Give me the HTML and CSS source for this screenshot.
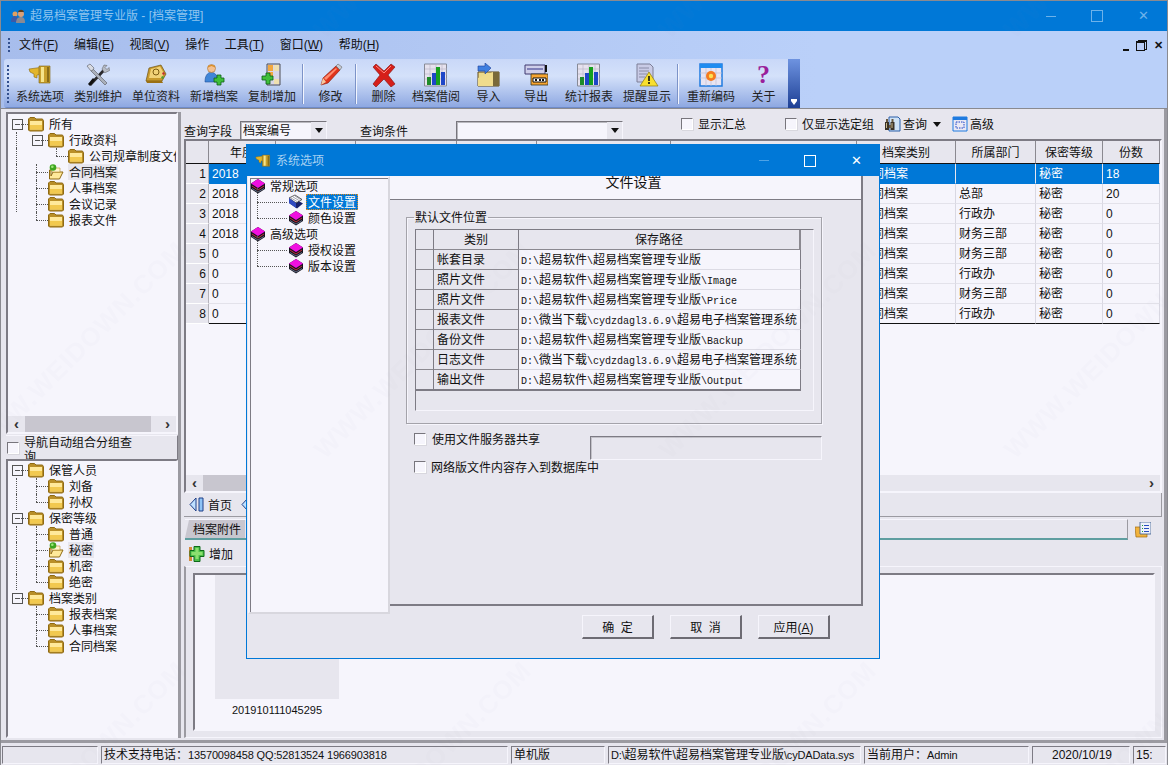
FILE: index.html
```html
<!DOCTYPE html>
<html lang="zh-CN">
<head>
<meta charset="utf-8">
<title>超易档案管理专业版</title>
<link rel="stylesheet" href="styles.css">
</head>
<body>
<svg class="defs" width="0" height="0" aria-hidden="true">
  <defs>
    <symbol id="folder" viewBox="0 0 16 16"><path d="M.5 4V3L2 1.500h4.500L8 3h6.500L15.500 5v9l-1 1h-13l-1-1z" fill="#b98f28" stroke="#8f6a14"/><path d="M2 5h12v8.500H2z" fill="#ffe99a"/><path d="M2 9h12v4.500H2z" fill="#f2c94f"/></symbol>
    <symbol id="folder-open" viewBox="0 0 16 16"><path d="M1.500 6v9h10l3.500-7H5l-2 4V6z" fill="#ffe99a" stroke="#8f6a14"/><path d="M3 7l2-3h7v4H5z" fill="#fff6cf" stroke="#b98f28" stroke-width=".6"/><circle cx="5" cy="3.500" r="3.300" fill="#3da51f"/><circle cx="4.300" cy="2.700" r="1.300" fill="#9fe57a"/></symbol>
    <symbol id="book" viewBox="0 0 16 16"><path d="M1 5.500 8 1l7 4.500V11l-7 4.500L1 11z" fill="#15151f"/><path d="M1 5.500 8 1l7 4.500L8 10z" fill="#f010e0"/><path d="M2 8l6 4 6-4" fill="none" stroke="#d83040" stroke-width=".9"/><path d="M2 10.500l6 3.500 6-3.500" fill="none" stroke="#6a7690" stroke-width=".9"/></symbol>
    <symbol id="book-open" viewBox="0 0 16 16"><path d="M1 9l8 5.500 6-5-7-4z" fill="#18206a"/><path d="M1 4l7 5 6-3.500L7 1z" fill="#fff" stroke="#222" stroke-width=".7"/><path d="M3 4l6 3.500M5 3l6 3.500M7 2l5.500 3.500" stroke="#667" stroke-width=".6"/><path d="M1 4v5l7 5V9z" fill="#2f49c0"/></symbol>
    <symbol id="gavel" viewBox="0 0 24 24"><path d="M1 6l11-1.500v7l-3 .5v3l-3-1V11L2 9z" fill="#e2b52c" stroke="#8a6a10" stroke-width=".6"/><path d="M11 3h11v17H11z" fill="#c9a02c" stroke="#7c6113" stroke-width=".6"/><path d="M13 4h3v15h-3z" fill="#f6e48a"/><path d="M19 4h2v15h-2z" fill="#8a6d17"/></symbol>
    <symbol id="tools" viewBox="0 0 24 24"><path d="M3 21l2 2L20 7l-2-2z" fill="#2a2a2e"/><path d="M16 6l2-4 3 .5-2 2 2 2 2-2 .5 3-4 2-1.500-.2z" fill="#b7bcc6" stroke="#555" stroke-width=".5"/><path d="M21 20l-2 2L5 8 7 6z" fill="#aab0ba" stroke="#55585f" stroke-width=".6"/><path d="M1 3l3-2 4 4-1 2-2 1z" fill="#d8dbe2" stroke="#55585f" stroke-width=".6"/><path d="M2 21l5-6 2 2-5 6z" fill="#111"/></symbol>
    <symbol id="address" viewBox="0 0 24 24"><path d="M5 5l12-3 5 9-4 7H2z" fill="#c89a2c" stroke="#6e5312" stroke-width=".7"/><path d="M7 6l9-2.500 4 7-2.500 4.500H5z" fill="#f1d277"/><circle cx="12" cy="9" r="3" fill="none" stroke="#7c5b10"/><path d="M2 18l16 0 1 2H3z" fill="#9a7014"/><path d="M19 9l2 1-1 2-2-1z" fill="#c03030"/><path d="M18 13l2 1-1 2-2-1z" fill="#4aa030"/></symbol>
    <symbol id="user-add" viewBox="0 0 24 24"><path d="M9 9c-4 1-6 4-6 10h13c0-6-2-9-7-10z" fill="#3f86d8" stroke="#1f4f98" stroke-width=".6"/><circle cx="9.500" cy="5.500" r="4" fill="#f3c090" stroke="#a56e30" stroke-width=".6"/><path d="M5.500 4.500C6 1 13 1 13.500 4.500L9.500 3z" fill="#d98a1f"/><path d="M15 12h4v3h3v4h-3v3h-4v-3h-3v-4h3z" fill="#3fbf3a" stroke="#0c5f16" stroke-width=".8"/></symbol>
    <symbol id="copy-add" viewBox="0 0 24 24"><path d="M7 1h13v21H7z" fill="#d9d6e8" stroke="#4f4f55"/><path d="M8 2h5v6H8zM8 9h5v6H8z" fill="#f2a73e"/><path d="M14 2h5v6h-5zM14 16h5v5h-5z" fill="#efe0b0"/><path d="M2 13h4v-3h4v3h3v4h-3v4H6v-4H2z" fill="#3fbf3a" stroke="#0c5f16" stroke-width=".8"/></symbol>
    <symbol id="pencil" viewBox="0 0 24 24"><path d="M2 22l2-7L17 3l4 4L9 20z" fill="#e0341c" stroke="#801808" stroke-width=".6"/><path d="M17 3l2-2 4 3-2 3z" fill="#c9ccd4" stroke="#666" stroke-width=".6"/><path d="M5 15L17 5l1 1L7 17z" fill="#ff8d70"/><path d="M2 22l2-7 3 4z" fill="#f4c9a0"/></symbol>
    <symbol id="cross" viewBox="0 0 24 24"><path d="M1 4l3-3 8 7 7-7 4 3-7 8 7 9-4 3-7-8-8 8-3-3 7-9z" fill="#d61f1a" stroke="#7f0f0b" stroke-width=".6"/><path d="M4 3l8 7 7-7" fill="none" stroke="#ff8a80"/></symbol>
    <symbol id="chart" viewBox="0 0 24 24"><path d="M.5 1h22v22H.5z" fill="#e6e2ee" stroke="#878a96"/><path d="M1 6h22M1 11h22M1 16h22M6 1v22M12 1v22M18 1v22" stroke="#b6b4c4" stroke-width=".6"/><path d="M3 14h4v8H3z" fill="#1e8c2a"/><path d="M8 10h4v12H8z" fill="#1e46c8"/><path d="M12 4h4v18h-4z" fill="#16a01e"/><path d="M17 9h4v13h-4z" fill="#1e46c8"/></symbol>
    <symbol id="import" viewBox="0 0 24 24"><path d="M1 9h21v14H1z" fill="#ecd98a" stroke="#5f4a1a"/><path d="M16 9h6v14h-6z" fill="#7a6a3a"/><path d="M1 15l15-6v14H1z" fill="#f0dc8c"/><path d="M1 3h7V0l6 5-6 6V8H1z" fill="#3f7fe0" stroke="#1f3f98" stroke-width=".6"/></symbol>
    <symbol id="export" viewBox="0 0 24 24"><path d="M1 2h20v9H1z" fill="#cfcfea" stroke="#403a70"/><path d="M3 5h16v2H3z" fill="#8080b8"/><path d="M21 2h2v7h-2z" fill="#111"/><path d="M7 11h17v11H7z" fill="#f7a531" stroke="#332" stroke-width=".8"/><path d="M9 15h13v4H9z" fill="#fff" stroke="#111"/><path d="M11 16h2v2h-2zM15 16h2v2h-2zM18 16h2v2h-2z" fill="#111"/></symbol>
    <symbol id="warn" viewBox="0 0 24 24"><path d="M2 1h13l3 3v15H2z" fill="#c9cbe6" stroke="#7c7e96"/><path d="M4 5h10M4 8h10M4 11h8M4 14h6" stroke="#8a8ca8"/><path d="M14 9l9 14H5z" fill="#f8df30" stroke="#8c7a10" stroke-width=".7"/><path d="M13.200 13h1.600v5h-1.600zM13.200 19h1.600v2h-1.600z" fill="#111"/></symbol>
    <symbol id="calendar" viewBox="0 0 24 24"><path d="M1 1h22v22H1z" fill="#e8e4f2" stroke="#1f7be0" stroke-width="1.500"/><path d="M1 1h22v4H1z" fill="#1f8cf0"/><path d="M1 10h22M1 15h22M7 5v18M12 5v18M17 5v18" stroke="#c0bed2" stroke-width=".7"/><circle cx="12" cy="13" r="5" fill="#f57a20"/><circle cx="12" cy="13" r="2.200" fill="#ffe050"/></symbol>
    <symbol id="search" viewBox="0 0 16 16"><path d="M4 1h9l2 2v12H4z" fill="#cfe2f6" stroke="#2a5fa8"/><path d="M0 6h4v8H0zM5.500 6h4v8h-4z" fill="#3a3228"/><path d="M1 3h2v3H1zM6.500 3h2v3h-2z" fill="#6a5a40"/><path d="M4 9h2v3H4z" fill="#6a5a40"/><path d="M1 7h1v5H1zM6.500 7h1v5h-1z" fill="#c9b98a"/></symbol>
    <symbol id="advanced" viewBox="0 0 16 16"><path d="M1 1h14v14H1z" fill="#e9e8f4" stroke="#1f7be0"/><path d="M1 1h14v3H1z" fill="#1f7be0"/><path d="M4 6h8v6H4z" fill="none" stroke="#1f46c8" stroke-dasharray="1.500 1"/></symbol>
    <symbol id="first" viewBox="0 0 16 16"><path d="M7 1v13L1 7.500z" fill="#bfe0ff" stroke="#1f3f88"/><path d="M10 1h4v13h-4z" fill="#8fc4f6" stroke="#1f3f88"/></symbol>
    <symbol id="plus" viewBox="0 0 16 16"><path d="M0 1h3v14H0z" fill="#d58a3a"/><path d="M5 .5h6v4h4v6h-4v5H5v-5H1v-6h4z" fill="#4cc04a" stroke="#0f6a1a"/><path d="M6.500 2h3v4h4v3h-4v4h-3V9h-4V6h4z" fill="#8ce070"/></symbol>
    <symbol id="report" viewBox="0 0 16 16"><path d="M0 5h10l2 2v8H1z" fill="#f2b33c" stroke="#a06a10" stroke-width=".7"/><path d="M5 0h11v12H5z" fill="#eef2fb" stroke="#39598c" stroke-width=".8"/><path d="M7 3h1v1H7zM7 6h1v1H7zM7 9h1v1H7z" fill="#1fa030"/><path d="M9 3h5v1H9zM9 6h5v1H9zM9 9h5v1H9z" fill="#2a4fc0"/></symbol>
  </defs>
</svg>

<div class="app">
  <header class="title-bar">
    <svg class="title-icon" viewBox="0 0 16 16"><circle cx="5" cy="6" r="2.500" fill="#e0a060"/><path d="M1 14c0-4 2-6 4-6s3 2 3 6z" fill="#3a5aa8"/><circle cx="11" cy="6" r="3" fill="#d9a078"/><path d="M8 4c1-3 5-3 6 0z" fill="#5a3a1a"/><path d="M6 15c0-4 2-6 5-6s4 2 4 6z" fill="#8a8a92"/></svg>
    <span class="title-text">超易档案管理专业版 - [档案管理]</span>
    <span class="win-ctl"><i class="ctl-min"></i><i class="ctl-max"></i><i class="ctl-close">✕</i></span>
  </header>

  <div class="bars">
    <nav class="menu-bar">
      <span class="gripper"></span>
      <span class="menu-item">文件(<u>F</u>)</span>
      <span class="menu-item">编辑(<u>E</u>)</span>
      <span class="menu-item">视图(<u>V</u>)</span>
      <span class="menu-item">操作</span>
      <span class="menu-item">工具(<u>T</u>)</span>
      <span class="menu-item">窗口(<u>W</u>)</span>
      <span class="menu-item">帮助(<u>H</u>)</span>
      <span class="mdi-ctl"><i class="mdi-min"></i><i class="mdi-restore"></i><i class="mdi-close">✕</i></span>
    </nav>
    <div class="tool-bar">
      <span class="gripper tall"></span>
      <a class="tool wide"><svg><use href="#gavel"/></svg><span>系统选项</span></a>
      <a class="tool wide"><svg><use href="#tools"/></svg><span>类别维护</span></a>
      <a class="tool wide"><svg><use href="#address"/></svg><span>单位资料</span></a>
      <a class="tool wide"><svg><use href="#user-add"/></svg><span>新增档案</span></a>
      <a class="tool wide"><svg><use href="#copy-add"/></svg><span>复制增加</span></a>
      <span class="tool-sep"></span>
      <a class="tool"><svg><use href="#pencil"/></svg><span>修改</span></a>
      <span class="tool-sep"></span>
      <a class="tool"><svg><use href="#cross"/></svg><span>删除</span></a>
      <a class="tool wide"><svg><use href="#chart"/></svg><span>档案借阅</span></a>
      <a class="tool"><svg><use href="#import"/></svg><span>导入</span></a>
      <a class="tool tool-48"><svg><use href="#export"/></svg><span>导出</span></a>
      <a class="tool wide"><svg><use href="#chart"/></svg><span>统计报表</span></a>
      <a class="tool wide"><svg><use href="#warn"/></svg><span>提醒显示</span></a>
      <span class="tool-sep"></span>
      <a class="tool wide"><svg><use href="#calendar"/></svg><span>重新编码</span></a>
      <a class="tool"><b class="help-glyph">?</b><span>关于</span></a>
      <span class="tool-end"><i></i></span>
    </div>
  </div>

  <main class="workspace">
    <aside class="left-pane">
      <div class="sunken tree-top">
        <div class="tree">
          <div class="node"><span class="cell box"></span><svg class="ico"><use href="#folder"/></svg><span class="label">所有</span></div>
          <div class="node"><span class="cell vline"></span><span class="cell box"></span><svg class="ico"><use href="#folder"/></svg><span class="label">行政资料</span></div>
          <div class="node"><span class="cell vline"></span><span class="cell"></span><span class="cell ell"></span><svg class="ico"><use href="#folder"/></svg><span class="label">公司规章制度文件</span></div>
          <div class="node"><span class="cell vline"></span><span class="cell tee"></span><svg class="ico"><use href="#folder-open"/></svg><span class="label on">合同档案</span></div>
          <div class="node"><span class="cell vline"></span><span class="cell tee"></span><svg class="ico"><use href="#folder"/></svg><span class="label">人事档案</span></div>
          <div class="node"><span class="cell vline"></span><span class="cell tee"></span><svg class="ico"><use href="#folder"/></svg><span class="label">会议记录</span></div>
          <div class="node"><span class="cell"></span><span class="cell ell"></span><svg class="ico"><use href="#folder"/></svg><span class="label">报表文件</span></div>
        </div>
        <div class="hscroll"><b class="arrow">‹</b><i class="thumb thumb-left"></i><b class="arrow">›</b></div>
      </div>
      <div class="group-check">
        <span class="check"></span>
        <span class="group-check-text">导航自动组合分组查询</span>
      </div>
      <div class="sunken tree-bottom">
        <div class="tree">
          <div class="node"><span class="cell box"></span><svg class="ico"><use href="#folder"/></svg><span class="label">保管人员</span></div>
          <div class="node"><span class="cell vline"></span><span class="cell tee"></span><svg class="ico"><use href="#folder"/></svg><span class="label">刘备</span></div>
          <div class="node"><span class="cell vline"></span><span class="cell ell"></span><svg class="ico"><use href="#folder"/></svg><span class="label">孙权</span></div>
          <div class="node"><span class="cell box"></span><svg class="ico"><use href="#folder"/></svg><span class="label">保密等级</span></div>
          <div class="node"><span class="cell vline"></span><span class="cell tee"></span><svg class="ico"><use href="#folder"/></svg><span class="label">普通</span></div>
          <div class="node"><span class="cell vline"></span><span class="cell tee"></span><svg class="ico"><use href="#folder-open"/></svg><span class="label on">秘密</span></div>
          <div class="node"><span class="cell vline"></span><span class="cell tee"></span><svg class="ico"><use href="#folder"/></svg><span class="label">机密</span></div>
          <div class="node"><span class="cell vline"></span><span class="cell ell"></span><svg class="ico"><use href="#folder"/></svg><span class="label">绝密</span></div>
          <div class="node"><span class="cell box"></span><svg class="ico"><use href="#folder"/></svg><span class="label">档案类别</span></div>
          <div class="node"><span class="cell"></span><span class="cell tee"></span><svg class="ico"><use href="#folder"/></svg><span class="label">报表档案</span></div>
          <div class="node"><span class="cell"></span><span class="cell tee"></span><svg class="ico"><use href="#folder"/></svg><span class="label">人事档案</span></div>
          <div class="node"><span class="cell"></span><span class="cell ell"></span><svg class="ico"><use href="#folder"/></svg><span class="label">合同档案</span></div>
        </div>
      </div>
    </aside>

    <section class="right-pane">
      <div class="query-row">
        <span class="q-label">查询字段</span>
        <span class="select select-field"><span>档案编号</span><b></b></span>
        <span class="q-label q-cond">查询条件</span>
        <span class="select select-cond"><span></span><b></b></span>
        <span class="check q-check-a"></span><span class="q-text">显示汇总</span>
        <span class="check q-check-b"></span><span class="q-text">仅显示选定组</span>
        <svg class="ico q-search"><use href="#search"/></svg><span class="q-text">查询</span><i class="q-caret"></i>
        <svg class="ico q-adv"><use href="#advanced"/></svg><span class="q-text">高级</span>
      </div>

      <div class="sunken data-grid">
        <div class="grid-rows">
          <div class="g-row g-head"><span>&nbsp;</span><span>年度</span><span></span><span></span><span></span><span></span><span></span><span>档案类别</span><span>所属部门</span><span>保密等级</span><span>份数</span></div>
          <div class="g-row g-sel"><span>1</span><span>2018</span><span></span><span></span><span></span><span></span><span></span><span>合同档案</span><span></span><span>秘密</span><span>18</span></div>
          <div class="g-row"><span>2</span><span>2018</span><span></span><span></span><span></span><span></span><span></span><span>合同档案</span><span>总部</span><span>秘密</span><span>20</span></div>
          <div class="g-row"><span>3</span><span>2018</span><span></span><span></span><span></span><span></span><span></span><span>合同档案</span><span>行政办</span><span>秘密</span><span>0</span></div>
          <div class="g-row"><span>4</span><span>2018</span><span></span><span></span><span></span><span></span><span></span><span>合同档案</span><span>财务三部</span><span>秘密</span><span>0</span></div>
          <div class="g-row"><span>5</span><span>0</span><span></span><span></span><span></span><span></span><span></span><span>合同档案</span><span>财务三部</span><span>秘密</span><span>0</span></div>
          <div class="g-row"><span>6</span><span>0</span><span></span><span></span><span></span><span></span><span></span><span>合同档案</span><span>行政办</span><span>秘密</span><span>0</span></div>
          <div class="g-row"><span>7</span><span>0</span><span></span><span></span><span></span><span></span><span></span><span>合同档案</span><span>财务三部</span><span>秘密</span><span>0</span></div>
          <div class="g-row g-last"><span>8</span><span>0</span><span></span><span></span><span></span><span></span><span></span><span>合同档案</span><span>行政办</span><span>秘密</span><span>0</span></div>
        </div>
        <div class="hscroll"><b class="arrow">‹</b><i class="thumb thumb-grid"></i><b class="arrow">›</b></div>
      </div>

      <div class="nav-row"><svg class="ico"><use href="#first"/></svg><span class="nav-text">首页</span><svg class="ico nav-next"><use href="#first"/></svg></div>
      <div class="tab-row">
        <div class="tab-strip"><span class="tab">档案附件</span></div>
        <svg class="ico tab-report"><use href="#report"/></svg>
      </div>
      <div class="attach-tools"><svg class="ico"><use href="#plus"/></svg><span class="nav-text">增加</span></div>
      <div class="attach-frame">
        <div class="sunken attach-view">
          <figure class="thumb-card">
            <div class="thumb-image"></div>
            <figcaption>201910111045295</figcaption>
          </figure>
        </div>
      </div>
    </section>
  </main>

  <footer class="status-bar">
    <span class="st st-a"></span>
    <span class="st st-b">技术支持电话：<span class="num">13570098458 QQ:52813524 1966903818</span></span>
    <span class="st st-c">单机版</span>
    <span class="st st-d"><span class="num">D:\</span>超易软件\超易档案管理专业版<span class="num">\cyDAData.sys</span></span>
    <span class="st st-e">当前用户：<span class="num">Admin</span></span>
    <span class="st st-f">2020/10/19</span>
    <span class="st st-g">15:</span>
  </footer>
</div>

<div class="dialog">
  <header class="dlg-title">
    <svg class="dlg-icon"><use href="#gavel"/></svg>
    <span class="dlg-title-text">系统选项</span>
    <span class="dlg-ctl"><i class="ctl-min"></i><i class="ctl-max"></i><i class="ctl-close">✕</i></span>
  </header>
  <div class="dlg-body">
    <div class="dlg-tree">
      <div class="d-node"><svg class="ico"><use href="#book"/></svg><span class="d-label">常规选项</span></div>
      <div class="d-node child d-tee"><svg class="ico"><use href="#book-open"/></svg><span class="d-label d-sel">文件设置</span></div>
      <div class="d-node child d-ell"><svg class="ico"><use href="#book"/></svg><span class="d-label">颜色设置</span></div>
      <div class="d-node"><svg class="ico"><use href="#book"/></svg><span class="d-label">高级选项</span></div>
      <div class="d-node child d-tee"><svg class="ico"><use href="#book"/></svg><span class="d-label">授权设置</span></div>
      <div class="d-node child d-ell"><svg class="ico"><use href="#book"/></svg><span class="d-label">版本设置</span></div>
    </div>
    <div class="dlg-main">
      <div class="dlg-panel">
        <h2 class="panel-head">文件设置</h2>
        <fieldset class="file-group">
          <legend>默认文件位置</legend>
          <div class="path-grid">
            <div class="p-row p-head"><span></span><span>类别</span><span>保存路径</span></div>
            <div class="p-row"><span></span><span>帐套目录</span><span><em>D:\</em>超易软件<em>\</em>超易档案管理专业版</span></div>
            <div class="p-row"><span></span><span>照片文件</span><span><em>D:\</em>超易软件<em>\</em>超易档案管理专业版<em>\Image</em></span></div>
            <div class="p-row"><span></span><span>照片文件</span><span><em>D:\</em>超易软件<em>\</em>超易档案管理专业版<em>\Price</em></span></div>
            <div class="p-row"><span></span><span>报表文件</span><span><em>D:\</em>微当下载<em>\cydzdagl3.6.9\</em>超易电子档案管理系统</span></div>
            <div class="p-row"><span></span><span>备份文件</span><span><em>D:\</em>超易软件<em>\</em>超易档案管理专业版<em>\Backup</em></span></div>
            <div class="p-row"><span></span><span>日志文件</span><span><em>D:\</em>微当下载<em>\cydzdagl3.6.9\</em>超易电子档案管理系统</span></div>
            <div class="p-row"><span></span><span>输出文件</span><span><em>D:\</em>超易软件<em>\</em>超易档案管理专业版<em>\Output</em></span></div>
          </div>
        </fieldset>
        <div class="opt-row opt-share">
          <span class="check"></span><span class="opt-text">使用文件服务器共享</span>
          <span class="opt-input"></span>
        </div>
        <div class="opt-row">
          <span class="check"></span><span class="opt-text opt-text-b">网络版文件内容存入到数据库中</span>
        </div>
      </div>
      <div class="dlg-buttons">
        <button class="btn" type="button">确 定</button>
        <button class="btn" type="button">取 消</button>
        <button class="btn" type="button">应用(<u>A</u>)</button>
      </div>
    </div>
  </div>
</div>

<svg class="watermark" width="1168" height="765" aria-hidden="true">
  <defs>
    <pattern id="wm" width="690" height="420" patternUnits="userSpaceOnUse" x="-60" y="120">
      <text x="0" y="0" transform="translate(40 340) rotate(-45)" class="wm-text">WWW.WEIDOWN.COM</text>
      <text x="0" y="0" transform="translate(385 340) rotate(-45)" class="wm-text">WWW.WEIDOWN.COM</text>
    </pattern>
  </defs>
  <rect width="1168" height="765" fill="url(#wm)"/>
</svg>
</body>
</html>
```
FILE: styles.css
```css
:root {
  --face: #e7e6ee;
  --paper: #f6f5fc;
  --dark: #7d7b84;
  --band: #9b9aa1;
  --blue: #0078d7;
  --ui: "Liberation Sans", "Noto Sans CJK SC", sans-serif;
}
* { box-sizing: border-box; }
html, body { margin: 0; padding: 0; }
body {
  position: relative;
  width: 1168px;
  height: 765px;
  overflow: hidden;
  font: 12px/16px var(--ui);
  color: #111;
  background: var(--face);
}
.defs { position: absolute; }
svg { display: block; }
i, em { font-style: normal; }

.app { display: flex; flex-direction: column; height: 765px; border: 1px solid #8a8a90; border-bottom: 0; }

/* title */
.title-bar { display: flex; align-items: center; height: 30px; background: var(--blue); color: #8fc4ee; flex: none; }
.title-icon { width: 16px; height: 16px; margin-left: 9px; }
.title-text { margin-left: 4px; }
.win-ctl, .dlg-ctl { margin-left: auto; display: flex; align-items: center; }
.win-ctl i { width: 46px; display: flex; justify-content: center; align-items: center; height: 30px; color: #6db2ea; }
.win-ctl { margin-right: 1px; }
.ctl-min::before { content: ""; width: 10px; height: 1px; background: currentColor; }
.ctl-max::before { content: ""; width: 10px; height: 10px; border: 1px solid currentColor; }
.ctl-close { font-size: 13px; }

/* bars */
.bars { height: 78px; flex: none; background: linear-gradient(90deg, #a7bdec, #bad0f9 70%); border-bottom: 1px solid #8a8a90; }
.menu-bar { display: flex; align-items: center; height: 28px; padding-left: 7px; }
.gripper { width: 2px; height: 14px; margin-right: 9px; background: repeating-linear-gradient(#33508f 0 2px, transparent 2px 4px); }
.gripper.tall { height: 38px; margin: 0 2px 0 3px; align-self: center; }
.menu-item { margin-right: 15.600px; }
.menu-item u { text-underline-offset: 1px; }
.mdi-ctl { margin-left: auto; margin-right: 3px; display: flex; align-items: center; gap: 6px; }
.mdi-ctl i { width: 11px; height: 11px; display: block; position: relative; }
.mdi-min::before { content: ""; position: absolute; left: 4px; bottom: 0; width: 6px; height: 2px; background: #111; }
.mdi-restore::before { content: ""; position: absolute; right: 0; top: 0; width: 7px; height: 7px; border: 1px solid #111; border-top-width: 2px; }
.mdi-restore::after { content: ""; position: absolute; left: 0; bottom: 0; width: 7px; height: 7px; border: 1px solid #111; border-top-width: 2px; background: #b9cdf7; }
.mdi-close { font-size: 11px; line-height: 11px; font-weight: 700; text-align: center; }

.tool-bar {
  display: flex;
  align-items: stretch;
  width: 796px;
  height: 49px;
  margin-left: 3px;
  background: linear-gradient(#c9d8f8, #d4e1fa 35%, #8fa9e2 97%, #5e7cbc);
  border-radius: 3px 0 0 3px;
}
.tool { display: flex; flex-direction: column; align-items: center; width: 47px; padding-top: 4px; color: #222; }
.tool.wide { width: 58px; }
.tool.tool-48 { width: 48px; }
.tool svg { width: 24px; height: 24px; flex: none; }
.tool span { margin-top: 2px; }
.help-glyph { height: 24px; font: 700 26px/24px "Liberation Serif", serif; color: #9a1f9a; }
.tool-sep { width: 1px; margin: 5px 3px 0 2px; height: 40px; background: #f2f5fe; box-shadow: -1px 0 0 #7c93c8; }
.tool-end { width: 12px; margin-left: auto; background: linear-gradient(#6e93e0, #1d3f94); display: flex; align-items: flex-end; justify-content: center; padding-bottom: 3px; }
.tool-end i { border: 3px solid transparent; border-top: 4px solid #fff; border-bottom: 0; box-shadow: 0 -2px 0 #fff; }

/* workspace */
.workspace { display: flex; height: 634px; flex: none; padding: 3px 2px 2px 5px; background: var(--face); border-bottom: 3px solid var(--band); border-right: 3px solid var(--band); }
.left-pane { width: 172px; flex: none; display: flex; flex-direction: column; box-shadow: 3px 0 0 0 var(--band); }
.right-pane { flex: 1; min-width: 0; margin-left: 6px; display: flex; flex-direction: column; }
.sunken { border: 2px solid; border-color: var(--dark) var(--paper) var(--paper) var(--dark); }

.tree-top { height: 322px; background: var(--paper); display: flex; flex-direction: column; overflow: hidden; }
.tree-top .tree { flex: 1; padding-top: 2px; overflow: hidden; }
.tree-bottom { flex: 1; background: var(--paper); border-top-width: 1px; padding-top: 1px; overflow: hidden; }
.tree { margin-left: -2px; }
.node { display: flex; align-items: center; height: 16px; white-space: nowrap; }
.cell { position: relative; width: 20px; height: 16px; flex: none; }
.cell.vline::before, .cell.tee::before, .cell.ell::before { content: ""; position: absolute; left: 10px; top: 0; bottom: 0; border-left: 1px dotted #555; }
.cell.ell::before { bottom: 8px; }
.cell.tee::after, .cell.ell::after { content: ""; position: absolute; left: 10px; right: -2px; top: 8px; border-top: 1px dotted #555; }
.cell.box::before { content: ""; position: absolute; left: 6px; top: 3px; width: 9px; height: 9px; border: 1px solid #555; background: linear-gradient(#555,#555) center/5px 1px no-repeat var(--paper); }
.cell.box::after { content: ""; position: absolute; left: 15px; right: -2px; top: 8px; border-top: 1px dotted #555; }
.ico { width: 16px; height: 16px; flex: none; }
.node .ico { margin-left: 2px; }
.label { margin-left: 4px; padding: 1px 1px 0; height: 16px; line-height: 16px; }
.label.on { background: var(--face); }

.hscroll { display: flex; align-items: center; height: 16px; background: var(--face); flex: none; }
.arrow { width: 17px; text-align: center; font: 700 15px/16px "Liberation Sans", sans-serif; color: #333; flex: none; }
.thumb { display: block; height: 16px; background: #c8c6cf; }
.thumb-left { width: 126px; }
.hscroll .arrow:last-child { margin-left: auto; }
.thumb-grid { width: 120px; }

.group-check { display: flex; height: 25px; margin-top: 1px; flex: none; overflow: hidden; background: var(--face); border-bottom: 1px solid var(--dark); border-top: 1px solid var(--paper); border-right: 1px solid var(--dark); }
.check { display: block; width: 12px; height: 12px; flex: none; background: var(--paper); border: 1px solid; border-color: #77757c #fff #fff #77757c; box-shadow: 1px 1px 0 #d8d7de; }
.group-check .check { margin: 6px 0 0 1px; }
.group-check-text { width: 118px; margin-left: 5px; line-height: 14px; margin-top: 0; }

/* query */
.query-row { display: flex; align-items: flex-start; height: 27px; overflow: hidden; flex: none; }
.q-label { margin-top: 12px; }
.select { display: flex; justify-content: space-between; height: 19px; margin-top: 9px; background: var(--paper); border: 1px solid; border-color: #77757c var(--paper) var(--paper) #77757c; box-shadow: inset 1px 1px 0 #b9b8be; padding-left: 2px; }
.select > span { padding-top: 1px; }
.select b { width: 15px; background: var(--face); position: relative; }
.select b::after { content: ""; position: absolute; left: 4px; top: 6px; border: 4px solid transparent; border-top: 5px solid #111; border-bottom: 0; }
.select-field { width: 87px; margin-left: 8px; }
.q-cond { margin-left: 33px; }
.select-cond { width: 167px; margin-left: 48px; }
.q-text { margin-top: 5px; }
.check.q-check-a { margin: 6px 5px 0 58px; }
.check.q-check-b { margin: 6px 5px 0 39px; }
.q-search { margin: 4px 2px 0 11px; }
.q-caret { margin: 10px 0 0 6px; border: 4.500px solid transparent; border-top: 5px solid #111; border-bottom: 0; }
.q-adv { margin: 4px 2px 0 11px; }

/* data grid */
.data-grid { height: 354px; background: var(--paper); display: flex; flex-direction: column; flex: none; }
.grid-rows { flex: 1; overflow: hidden; }
.g-row { display: grid; grid-template-columns: 23px 67px 80px 101px 80px 134px 186px 99px 80px 67px 57px; height: 20px; }
.g-row span { padding: 2px 0 0 3px; border-right: 1px solid #d9d8e2; border-bottom: 1px solid #e3e2ea; white-space: nowrap; overflow: hidden; }
.g-row span:first-child { background: var(--face); text-align: right; padding: 2px 2px 0 0; border-color: #fff; border-right-color: #b5b4bb; }
.g-head { height: 23px; }
.g-head span { background: var(--face); text-align: center; padding: 4px 0 0; border-right: 1px solid #8b8990; border-bottom: 1px solid #111; }
.g-head span:first-child { border-bottom: 1px solid #111; border-right-color: #8b8990; }
.g-sel span { background: var(--blue); color: #fff; border-right-color: #e7e6ee; border-bottom-color: var(--blue); }
.g-sel span:first-child { background: var(--face); color: #111; border-bottom-color: #fff; }
.g-last span { border-bottom: 1px solid #111; }

.nav-row { display: flex; align-items: center; gap: 3px; height: 24px; padding-left: 5px; flex: none; border-bottom: 1px solid var(--band); border-right: 1px solid var(--band); }
.nav-text { padding-top: 2px; }
.nav-next { margin-left: 6px; }
.tab-row { display: flex; align-items: flex-start; height: 24px; padding-top: 2px; flex: none; }
.tab-strip { width: 943px; height: 21px; border-top: 1px solid var(--paper); border-right: 1px solid var(--band); border-bottom: 2px solid #5f9ea0; margin-left: 1px; }
.tab { display: block; width: 60px; height: 18px; padding: 2px 0 0 8px; line-height: 16px; background: #c8c6cf; clip-path: polygon(4px 0, 100% 0, 100% 100%, 0 100%); }
.tab-report { margin-left: 7px; margin-top: 3px; }
.attach-tools { display: flex; align-items: center; gap: 4px; height: 25px; padding-left: 5px; flex: none; }
.attach-frame { flex: 1; min-height: 0; display: flex; padding: 6px 6px 6px 7px; background: var(--face); border-top: 1px solid var(--paper); border-left: 2px solid var(--band); border-right: 1px solid var(--paper); border-bottom: 1px solid var(--paper); }
.attach-view { flex: 1; min-width: 0; background: var(--paper); overflow: hidden; }
.thumb-card { margin: 0 0 0 20px; width: 124px; display: flex; flex-direction: column; align-items: center; }
.thumb-image { width: 124px; height: 124px; flex: none; background: var(--face); }
.thumb-card figcaption { font: 11px/16px "Liberation Sans", sans-serif; margin-top: 3px; }

/* status */
.status-bar { display: flex; gap: 3px; height: 22px; flex: none; padding: 3px 1px 0 1px; background: var(--face); }
.st { display: block; height: 18px; line-height: 16px; padding-left: 2px; white-space: nowrap; overflow: hidden; border: 1px solid; border-color: var(--dark) var(--paper) var(--paper) var(--dark); }
.num { font-size: 11px; letter-spacing: -.15px; }
.st-a { width: 96px; }
.st-b { width: 407px; }
.st-c { width: 94px; }
.st-d { width: 253px; }
.st-e { width: 165px; }
.st-f { width: 98px; text-align: center; }
.st-g { flex: 1; }

/* dialog */
.dialog { position: absolute; left: 246px; top: 144px; width: 634px; height: 515px; background: var(--face); border: 1px solid var(--blue); display: flex; flex-direction: column; }
.dlg-title { display: flex; align-items: center; height: 31px; background: var(--blue); color: #a8d2f2; flex: none; }
.dlg-icon { width: 16px; height: 16px; margin-left: 8px; }
.dlg-title-text { margin-left: 5px; }
.dlg-ctl i { width: 46px; display: flex; justify-content: center; align-items: center; height: 31px; color: #fff; }
.dlg-ctl .ctl-min { color: #4ea3e6; }
.dlg-body { display: flex; flex: 1; min-height: 0; padding-left: 1px; }
.dlg-tree { width: 142px; height: 438px; flex: none; background: var(--paper); border: 2px solid; border-color: var(--paper) #d8d7de #d8d7de var(--paper); padding: 0; box-shadow: inset 1px 1px 0 var(--dark); }
.d-node { position: relative; display: flex; align-items: center; height: 16px; }
.d-node.child { padding-left: 38px; }
.d-label { margin-left: 3px; white-space: nowrap; padding: 1px 1px 0; height: 16px; line-height: 16px; }
.d-sel { background: var(--blue); color: #fff; outline: 1px dotted #e08a20; outline-offset: -1px; padding: 1px 2px 0; margin-left: 2px; }
.d-tee::before, .d-ell::before { content: ""; position: absolute; left: 7px; top: -6px; bottom: 0; border-left: 1px dotted #555; }
.d-ell::before { top: -8px; bottom: 8px; }
.d-tee::after, .d-ell::after { content: ""; position: absolute; left: 7px; top: 8px; width: 30px; border-top: 1px dotted #555; }
.dlg-main { flex: 1; min-width: 0; display: flex; flex-direction: column; margin-right: 16px; }
.dlg-panel { height: 430px; flex: none; background: var(--face); border-right: 2px solid var(--dark); border-bottom: 2px solid var(--dark); }
.panel-head { height: 24px; margin: 0; padding-left: 16px; font-size: 14px; font-weight: 400; line-height: 13px; text-align: center; background: var(--paper); border-bottom: 1px solid var(--dark); overflow: hidden; }
.file-group { width: 416px; height: 214px; margin: 10px 0 0 16px; padding: 5px 0 0 8px; border: 1px solid #a4a3aa; box-shadow: inset 1px 1px 0 var(--paper), 1px 1px 0 var(--paper); min-width: 0; }
.file-group legend { margin-left: -1px; padding: 0 1px; line-height: 16px; height: 14px; }
.path-grid { width: 399px; height: 182px; background: var(--face); border: 1px solid; border-color: var(--dark) var(--paper) var(--paper) var(--dark); }
.p-row { display: grid; grid-template-columns: 18px 85px 282px; height: 20px; width: 385px; }
.p-row span { border-right: 1px solid #7d7b84; border-bottom: 1px solid #dcdbe4; white-space: nowrap; overflow: hidden; padding: 2px 0 0 3px; }
.p-row span:nth-child(-n+2) { background: var(--face); border-bottom-color: #8b8990; }
.p-row span:nth-child(3) { background: var(--paper); padding-left: 2px; border-right: 1px solid var(--dark); }
.p-head span { background: var(--face); border-bottom: 1px solid #8b8990; text-align: center; padding: 2px 0 0; }
.p-head span:nth-child(3) { background: var(--face); text-align: center; padding: 2px 0 0; border-right: 2px solid #8b8990; }
.p-row:last-child span { border-bottom: 2px solid var(--dark); height: 21px; }
.p-row em { font: 10px/16px "Liberation Mono", monospace; }
.opt-row { display: flex; align-items: flex-start; margin-left: 24px; height: 28px; }
.opt-share { margin-top: 9px; }
.opt-text { margin-left: 6px; line-height: 14px; }
.opt-text-b { margin-left: 5px; }
.opt-input { display: block; width: 232px; height: 24px; margin: 3px 0 0 50px; background: var(--face); border: 1px solid; border-color: var(--dark) var(--paper) var(--paper) var(--dark); box-shadow: inset 1px 1px 0 #c2c1c8; }
.dlg-buttons { display: flex; gap: 16px; margin: 9px 0 0 192px; }
.btn { width: 72px; height: 24px; padding: 2px 0 0; font: 12px/16px var(--ui); color: #111; background: var(--face); border: 1px solid; border-color: var(--paper) #6d6b73 #6d6b73 var(--paper); border-right-width: 2px; border-bottom-width: 2px; word-spacing: 3px; }

/* watermark */
.watermark { position: absolute; left: 0; top: 0; pointer-events: none; }
.wm-text { font: 700 26px "Liberation Sans", sans-serif; fill: #6a6890; fill-opacity: .025; letter-spacing: 1px; }
```
